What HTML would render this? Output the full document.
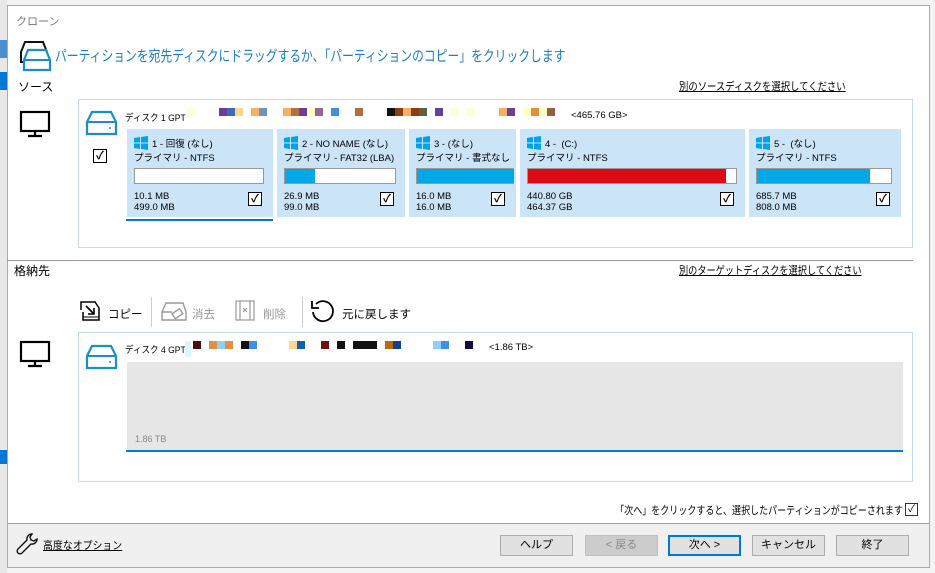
<!DOCTYPE html>
<html><head><meta charset="utf-8"><style>
*{margin:0;padding:0;box-sizing:border-box}
body{width:935px;height:573px;overflow:hidden;background:#f3f3f3;font-family:"Liberation Sans","Noto Sans CJK JP",sans-serif;position:relative;color:#000}
.a{position:absolute;white-space:nowrap}
.sx{transform-origin:left center}
#dlg{position:absolute;left:7px;top:5px;width:923px;height:563px;background:#fff;border:1px solid #aaa}
.part{position:absolute;top:129px;height:88px;background:#cce4f7;font-size:9.5px}
.part .t{position:absolute;left:7px;top:7px}
.part .s{position:absolute;left:7px;top:21px}
.part .bar{position:absolute;left:7px;top:39px;height:16px;border:1px solid #999;background:#fff}
.part .bar i{display:block;height:100%;background:#00a8e8}
.part .n{position:absolute;left:7px;top:62px;line-height:11px}
.cb{position:absolute;width:14px;height:14px;border:1px solid #000;background:#fff;font-size:11px;line-height:12px;text-align:center;font-weight:bold}
.win{display:inline-block;width:14px;height:14px;vertical-align:-3px;margin-right:4px}
.btn{position:absolute;top:535px;height:21px;width:73px;border:1px solid #adadad;background:#e1e1e1;font-size:11px;text-align:center;line-height:19px}
.sq{position:absolute;top:108px;width:8px;height:8px}
</style></head><body>
<div style="position:absolute;left:0;top:0;width:7px;height:573px;background:#e8e8e8"></div>
<div style="position:absolute;left:0;top:40px;width:7px;height:18px;background:#4a90d0"></div>
<div style="position:absolute;left:0;top:72px;width:7px;height:18px;background:#0078d7"></div>
<div style="position:absolute;left:0;top:450px;width:7px;height:14px;background:#0078d7"></div>
<div id="dlg"></div>
<div class="a" style="left:16px;top:13px;font-size:11px;color:#777">クローン</div>
<svg class="a" style="left:18px;top:40px" width="36" height="32" viewBox="0 0 36 32"><path d="M3 12 L7 2 H25 L29 12 V22 H3Z" fill="none" stroke="#111" stroke-width="2"/><path d="M6 20 L10 10 H28 L32 20 V30 H6Z" fill="#fff" stroke="#1a8fc4" stroke-width="2.2"/><line x1="6" y1="20" x2="32" y2="20" stroke="#1a8fc4" stroke-width="2"/></svg>
<div class="a sx" style="left:55px;top:45px;font-size:15px;color:#1a7fc4;transform:scaleX(0.786)">パーティションを宛先ディスクにドラッグするか、「パーティションのコピー」をクリックします</div>
<div class="a" style="left:18px;top:78px;font-size:12px">ソース</div>
<div class="a sx" style="left:679px;top:78px;font-size:11px;text-decoration:underline;transform:scaleX(0.85)">別のソースディスクを選択してください</div>
<div style="position:absolute;left:78px;top:99px;width:835px;height:149px;border:1px solid #bfdcef"></div>
<svg class="a" style="left:19px;top:110px" width="32" height="28" viewBox="0 0 32 28"><rect x="2" y="2" width="28" height="19" fill="none" stroke="#000" stroke-width="2.2"/><path d="M16 21v4M9 26h14" stroke="#000" stroke-width="2.2"/></svg>
<svg class="a" style="left:85px;top:110px" width="33" height="26" viewBox="0 0 33 26"><path d="M2 12 L7 2 H26 L31 12 V24 H2Z" fill="none" stroke="#1a8fc4" stroke-width="2.2"/><line x1="2" y1="12" x2="31" y2="12" stroke="#1a8fc4" stroke-width="2"/><circle cx="25" cy="18" r="1" fill="#1a8fc4"/></svg>
<div class="cb" style="left:93px;top:149px">✓</div>
<div class="a sx" style="left:125px;top:110px;font-size:9.5px;transform:scaleX(0.9)">ディスク 1 GPT</div>
<div class="sq" style="left:187px;background:#ffffd0"></div>
<div class="sq" style="left:219px;width:24px;background:linear-gradient(90deg,#6a3d9a 33%,#3d6bb8 33% 66%,#fcd68e 66%)"></div>
<div class="sq" style="left:251px;width:16px;background:linear-gradient(90deg,#f8b060 50%,#7094b8 50%)"></div>
<div class="sq" style="left:283px;width:40px;background:linear-gradient(90deg,#f8b060 20%,#b86c40 20% 40%,#6a3d9a 40% 60%,#ffffc0 60% 80%,#906890 80%)"></div>
<div class="sq" style="left:331px;background:#4090e0"></div>
<div class="sq" style="left:355px;background:#b86c40"></div>
<div class="sq" style="left:387px;width:40px;background:linear-gradient(90deg,#111 20%,#903c10 20% 40%,#f8b060 40% 60%,#903c10 60% 80%,#606040 80%)"></div>
<div class="sq" style="left:435px;background:#6a3d9a"></div>
<div class="sq" style="left:451px;background:#ffffd0"></div>
<div class="sq" style="left:467px;background:#ffffd0"></div>
<div class="sq" style="left:499px;width:16px;background:linear-gradient(90deg,#f8b060 50%,#6a3d9a 50%)"></div>
<div class="sq" style="left:523px;width:32px;background:linear-gradient(90deg,#ffffc0 25%,#e09040 25% 50%,#ffffc0 50% 75%,#906040 75%)"></div>
<div class="a" style="left:571px;top:110px;font-size:9.5px">&lt;465.76 GB&gt;</div>

<div class="part" style="left:127px;width:146px"><div class="t"><svg class="win" viewBox="0 0 14 14"><path d="M0 2l6-1v5.5H0zM7 1l7-1v6.5H7zM0 7.5h6V13l-6-1zM7 7.5h7V14l-7-1z" fill="#00a2e8"/></svg>1 - 回復 (なし)</div><div class="s">プライマリ - NTFS</div><div class="bar" style="width:130px"></div><div class="n">10.1 MB<br>499.0 MB</div><div class="cb" style="left:121px;top:63px">✓</div></div>
<div style="position:absolute;left:126px;top:219px;width:147px;height:2px;background:#0078d7"></div>
<div class="part" style="left:277px;width:128px"><div class="t"><svg class="win" viewBox="0 0 14 14"><path d="M0 2l6-1v5.5H0zM7 1l7-1v6.5H7zM0 7.5h6V13l-6-1zM7 7.5h7V14l-7-1z" fill="#00a2e8"/></svg>2 - NO NAME (なし)</div><div class="s">プライマリ - FAT32 (LBA)</div><div class="bar" style="width:112px"><i style="width:27%"></i></div><div class="n">26.9 MB<br>99.0 MB</div><div class="cb" style="left:103px;top:63px">✓</div></div>
<div class="part" style="left:409px;width:107px"><div class="t"><svg class="win" viewBox="0 0 14 14"><path d="M0 2l6-1v5.5H0zM7 1l7-1v6.5H7zM0 7.5h6V13l-6-1zM7 7.5h7V14l-7-1z" fill="#00a2e8"/></svg>3 - (なし)</div><div class="s">プライマリ - 書式なし</div><div class="bar" style="width:98px;border-right:0"><i style="width:100%"></i></div><div class="n">16.0 MB<br>16.0 MB</div><div class="cb" style="left:82px;top:63px">✓</div></div>
<div class="part" style="left:520px;width:225px"><div class="t"><svg class="win" viewBox="0 0 14 14"><path d="M0 2l6-1v5.5H0zM7 1l7-1v6.5H7zM0 7.5h6V13l-6-1zM7 7.5h7V14l-7-1z" fill="#00a2e8"/></svg>4 - &nbsp;(C:)</div><div class="s">プライマリ - NTFS</div><div class="bar" style="width:210px"><i style="width:95%;background:#dc0a14"></i></div><div class="n">440.80 GB<br>464.37 GB</div><div class="cb" style="left:200px;top:63px">✓</div></div>
<div class="part" style="left:749px;width:152px"><div class="t"><svg class="win" viewBox="0 0 14 14"><path d="M0 2l6-1v5.5H0zM7 1l7-1v6.5H7zM0 7.5h6V13l-6-1zM7 7.5h7V14l-7-1z" fill="#00a2e8"/></svg>5 - &nbsp;(なし)</div><div class="s">プライマリ - NTFS</div><div class="bar" style="width:136px"><i style="width:84%"></i></div><div class="n">685.7 MB<br>808.0 MB</div><div class="cb" style="left:127px;top:63px">✓</div></div>

<div style="position:absolute;left:7px;top:260px;width:906px;height:1px;background:#999"></div>
<div class="a" style="left:14px;top:262px;font-size:12px">格納先</div>
<div class="a sx" style="left:679px;top:262px;font-size:11px;text-decoration:underline;transform:scaleX(0.835)">別のターゲットディスクを選択してください</div>

<svg class="a" style="left:79px;top:298px" width="26" height="26" viewBox="0 0 26 26"><path d="M2 12V4h14l4 6v12H4v-8" fill="none" stroke="#000" stroke-width="1.5"/><path d="M7 8l8 8M15 10v6H9" fill="none" stroke="#000" stroke-width="1.6"/><line x1="4" y1="19" x2="20" y2="19" stroke="#000"/></svg>
<div class="a" style="left:108px;top:306px;font-size:11.5px">コピー</div>
<div style="position:absolute;left:151px;top:297px;width:1px;height:30px;background:#ccc"></div>
<svg class="a" style="left:160px;top:300px" width="28" height="22" viewBox="0 0 28 22"><path d="M2 12L6 3h17l3 9v8H2z M2 12h10" fill="none" stroke="#999" stroke-width="1.4"/><rect x="13" y="11" width="9" height="6" transform="rotate(-35 17 14)" fill="#fff" stroke="#999" stroke-width="1.4"/></svg>
<div class="a" style="left:192px;top:306px;font-size:11.5px;color:#999">消去</div>
<svg class="a" style="left:235px;top:300px" width="22" height="22" viewBox="0 0 22 22"><rect x="1" y="1" width="18" height="19" fill="none" stroke="#999" stroke-width="1.2"/><path d="M5 1v19M15 1v19M8 8l4 4M12 8l-4 4" stroke="#999" stroke-width="1.2"/></svg>
<div class="a" style="left:263px;top:306px;font-size:11.5px;color:#999">削除</div>
<div style="position:absolute;left:302px;top:297px;width:1px;height:30px;background:#ccc"></div>
<svg class="a" style="left:310px;top:298px" width="26" height="26" viewBox="0 0 26 26"><path d="M6 6A10 10 0 1 1 3 14" fill="none" stroke="#000" stroke-width="1.8"/><path d="M2 3v7h7" fill="none" stroke="#000" stroke-width="1.8"/></svg>
<div class="a" style="left:342px;top:306px;font-size:11.5px">元に戻します</div>

<div style="position:absolute;left:78px;top:332px;width:835px;height:150px;border:1px solid #bfdcef"></div>
<svg class="a" style="left:19px;top:340px" width="32" height="28" viewBox="0 0 32 28"><rect x="2" y="2" width="28" height="19" fill="none" stroke="#000" stroke-width="2.2"/><path d="M16 21v4M9 26h14" stroke="#000" stroke-width="2.2"/></svg>
<svg class="a" style="left:85px;top:344px" width="33" height="26" viewBox="0 0 33 26"><path d="M2 12 L7 2 H26 L31 12 V24 H2Z" fill="none" stroke="#1a8fc4" stroke-width="2.2"/><line x1="2" y1="12" x2="31" y2="12" stroke="#1a8fc4" stroke-width="2"/><circle cx="25" cy="18" r="1" fill="#1a8fc4"/></svg>
<div class="a sx" style="left:125px;top:342px;font-size:9.5px;transform:scaleX(0.9)">ディスク 4 GPT</div>
<div class="sq" style="top:341px;left:185px;width:6px;height:16px;background:#d8f8ff"></div>
<div class="sq" style="top:341px;left:193px;background:#4a1010"></div>
<div class="sq" style="top:341px;left:209px;width:24px;background:linear-gradient(90deg,#e09040 33%,#90d0f8 33% 66%,#e09040 66%)"></div>
<div class="sq" style="top:341px;left:241px;width:16px;background:linear-gradient(90deg,#111 50%,#4090e0 50%)"></div>
<div class="sq" style="top:341px;left:289px;width:16px;background:linear-gradient(90deg,#fcd890 50%,#1060b0 50%)"></div>
<div class="sq" style="top:341px;left:321px;background:#701010"></div>
<div class="sq" style="top:341px;left:337px;background:#111"></div>
<div class="sq" style="top:341px;left:353px;width:24px;background:#111"></div>
<div class="sq" style="top:341px;left:385px;width:16px;background:linear-gradient(90deg,#b86810 50%,#104090 50%)"></div>
<div class="sq" style="top:341px;left:433px;width:16px;background:linear-gradient(90deg,#90d0f8 50%,#4090e0 50%)"></div>
<div class="sq" style="top:341px;left:465px;background:#101040"></div>
<div class="a" style="left:489px;top:342px;font-size:9.5px">&lt;1.86 TB&gt;</div>
<div style="position:absolute;left:127px;top:362px;width:776px;height:89px;background:#e6e6e6"></div>
<div style="position:absolute;left:126px;top:450px;width:777px;height:2px;background:#0078d7"></div>
<div class="a" style="left:135px;top:434px;font-size:9px;color:#888">1.86 TB</div>

<div class="a" style="right:32px;top:502px;font-size:11px;transform:scaleX(0.82);transform-origin:right center">「次へ」をクリックすると、選択したパーティションがコピーされます</div>
<div class="cb" style="left:905px;top:503px;width:13px;height:13px;border-color:#333;font-weight:normal;font-size:10px;line-height:11px">✓</div>

<div style="position:absolute;left:8px;top:523px;width:921px;height:44px;background:#f0f0f0;border-top:1px solid #a0a0a0"></div>
<svg class="a" style="left:15px;top:532px" width="24" height="24" viewBox="0 0 24 24"><path d="M17 2a5 5 0 0 0-5 6L3 17a2.5 2.5 0 0 0 4 4l9-9a5 5 0 0 0 6-5l-3 2-3-1-1-3z" fill="none" stroke="#111" stroke-width="1.4"/></svg>
<div class="a sx" style="left:43px;top:537px;font-size:11px;text-decoration:underline;transform:scaleX(0.9)">高度なオプション</div>
<div class="btn" style="left:500px">ヘルプ</div>
<div class="btn" style="left:585px;background:#cccccc;border-color:#bfbfbf;color:#888">&lt; 戻る</div>
<div class="btn" style="left:668px;border:2px solid #0078d7;line-height:17px">次へ &gt;</div>
<div class="btn" style="left:752px">キャンセル</div>
<div class="btn" style="left:836px">終了</div>
</body></html>
